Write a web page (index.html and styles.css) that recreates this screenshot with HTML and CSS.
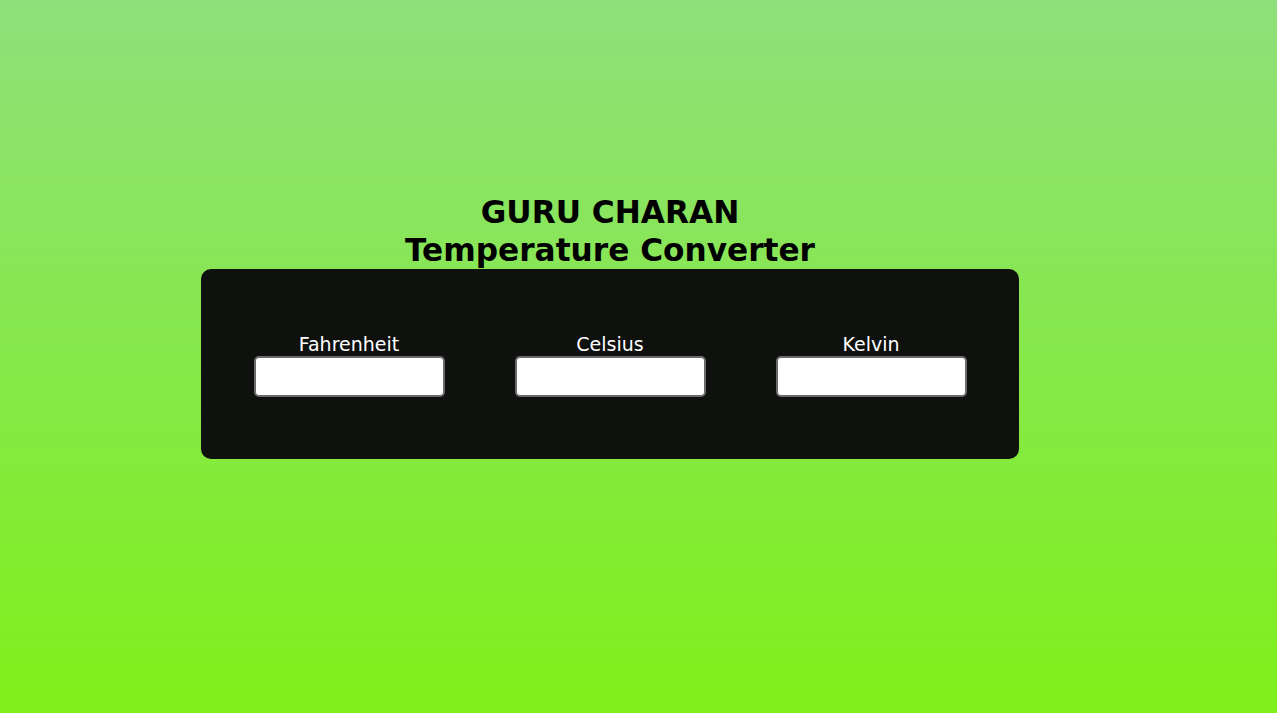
FILE: index.html
```html
<!DOCTYPE html>
<html>
<head>
<meta charset="utf-8">
<link rel="stylesheet" href="styles.css">
</head>
<body>
<div class="page">
  <h1 class="title">GURU CHARAN<br>Temperature Converter</h1>
  <div class="box">
    <div class="field">
      <label class="label" for="f">Fahrenheit</label>
      <input class="input" id="f" type="text">
    </div>
    <div class="field">
      <label class="label" for="c">Celsius</label>
      <input class="input" id="c" type="text">
    </div>
    <div class="field">
      <label class="label" for="k">Kelvin</label>
      <input class="input" id="k" type="text">
    </div>
  </div>
</div>
</body>
</html>
```

FILE: styles.css
```css
html, body {
  margin: 0;
  padding: 0;
  height: 100%;
}
body {
  background: linear-gradient(to bottom, #8ee07a 0%, #7ff01a 100%);
  font-family: "DejaVu Sans", sans-serif;
  overflow: hidden;
}
.page {
  width: 818px;
  margin-left: 201px;
  padding-top: 193px;
}
.title {
  margin: 0;
  font-size: 31.2px;
  line-height: 38px;
  font-weight: bold;
  text-align: center;
  color: #000;
}
.box {
  height: 190px;
  background: #0f110f;
  border-radius: 10px;
  display: flex;
  justify-content: center;
  align-items: center;
  gap: 70px;
}
.field {
  display: flex;
  flex-direction: column;
  align-items: center;
  padding-top: 3px;
}
.label {
  color: #fff;
  font-size: 19px;
  line-height: 21px;
  margin-bottom: 1px;
}
.input {
  box-sizing: border-box;
  width: 191px;
  height: 41px;
  background: #fff;
  border: 2px solid #6b6b6b;
  border-radius: 5px;
  font-family: "DejaVu Sans", sans-serif;
  font-size: 16px;
  padding: 0 6px;
}
```
